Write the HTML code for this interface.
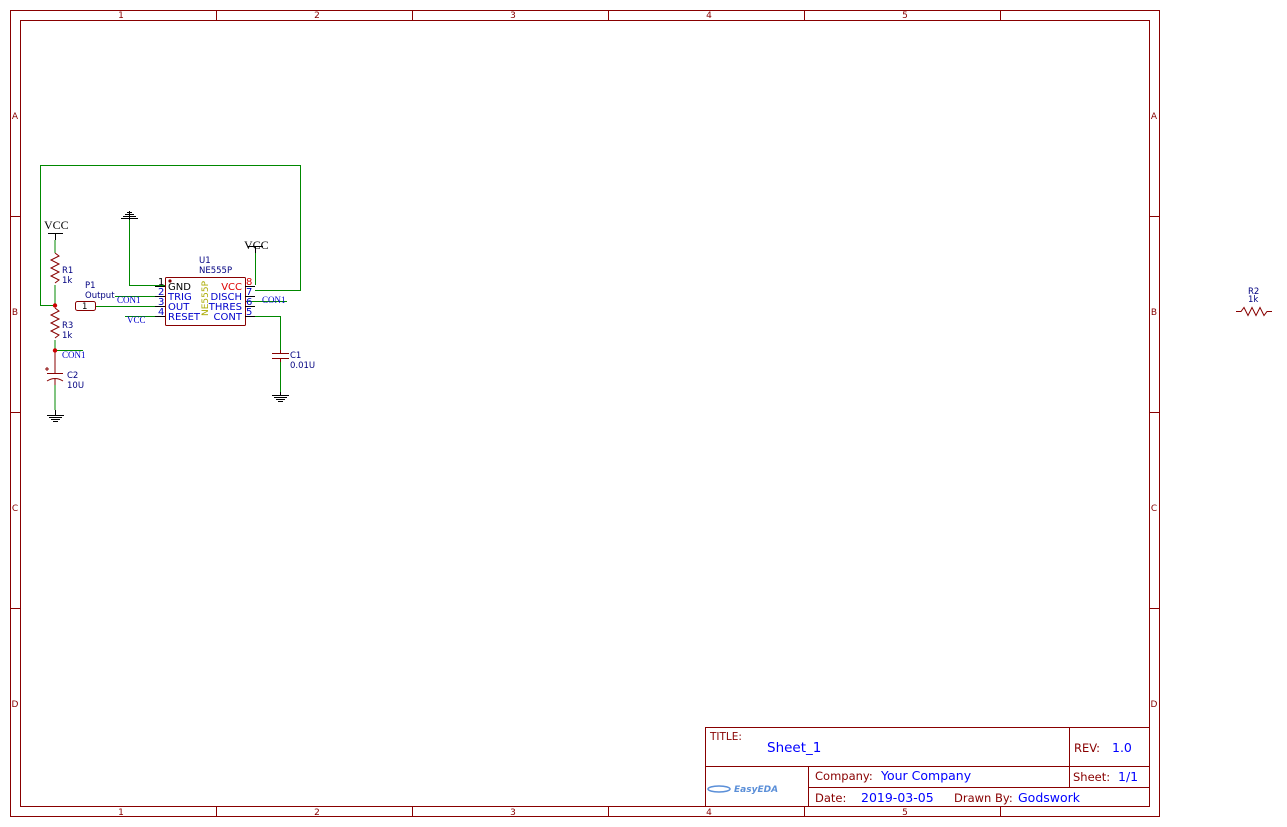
<!DOCTYPE html>
<html><head><meta charset="utf-8"><style>
html,body{margin:0;padding:0;background:#fff;width:1287px;height:827px;overflow:hidden}
svg{display:block}
text{font-family:"DejaVu Sans","Liberation Sans",sans-serif}
.s{font-family:"Liberation Serif",serif}
</style></head><body>
<svg width="1287" height="827" viewBox="0 0 1287 827" xmlns="http://www.w3.org/2000/svg">
<g fill="none" stroke="#880000" stroke-width="1">
<rect x="10.5" y="10.5" width="1149" height="806"/>
<rect x="20.5" y="20.5" width="1129" height="786"/>
<path d="M216.5 10v10M412.5 10v10M608.5 10v10M804.5 10v10M1000.5 10v10M216.5 806v10M412.5 806v10M608.5 806v10M804.5 806v10M1000.5 806v10M10 216.5h10M10 412.5h10M10 608.5h10M1149 216.5h10M1149 412.5h10M1149 608.5h10"/>
<rect x="705.5" y="727.5" width="444" height="79"/>
<path d="M705 766.5h444M808.5 766v40M808 787.5h341M1069.5 727v60"/>
</g>
<g fill="#880000" font-size="9" text-anchor="middle">
<text x="121" y="18">1</text><text x="317" y="18">2</text><text x="513" y="18">3</text><text x="709" y="18">4</text><text x="905" y="18">5</text>
<text x="121" y="815">1</text><text x="317" y="815">2</text><text x="513" y="815">3</text><text x="709" y="815">4</text><text x="905" y="815">5</text>
<text x="15" y="119">A</text><text x="15" y="315">B</text><text x="15" y="511">C</text><text x="15" y="707">D</text>
<text x="1154" y="119">A</text><text x="1154" y="315">B</text><text x="1154" y="511">C</text><text x="1154" y="707">D</text>
</g>
<g font-size="11.5">
<text x="710" y="740" fill="#880000" font-size="10.5">TITLE:</text>
<text x="767" y="752" fill="#0000ff" font-size="13.5">Sheet_1</text>
<text x="1074" y="752" fill="#880000">REV:</text><text x="1112" y="752" fill="#0000ff" font-size="12.5">1.0</text>
<text x="815" y="780" fill="#880000">Company:</text><text x="881" y="780" fill="#0000ff" font-size="12.5">Your Company</text>
<text x="1073" y="781" fill="#880000">Sheet:</text><text x="1118" y="781" fill="#0000ff" font-size="12.5">1/1</text>
<text x="815" y="802" fill="#880000">Date:</text><text x="861" y="802" fill="#0000ff" font-size="12.5">2019-03-05</text>
<text x="954" y="802" fill="#880000">Drawn By:</text><text x="1018" y="802" fill="#0000ff" font-size="12.5">Godswork</text>
<text x="734" y="792" fill="#5b8fd8" font-size="9" font-style="italic" font-weight="bold">EasyEDA</text>
</g>
<ellipse cx="719" cy="789" rx="11" ry="3" fill="none" stroke="#5b8fd8" stroke-width="1.5"/>
<g fill="none" stroke="#008800" stroke-width="1">
<path d="M55.5 305.5H40.5V165.5H300.5V290.5H255"/>
<path d="M55 240v13M55 285v20M55 340v10M55 350.5h28M55 385v25"/>
<path d="M129.5 220v65.5H165"/>
<path d="M255.5 253v32"/>
<path d="M115 296.5h50M125 316.5h40M245 301.5h42M245 316.5h35.5V350M280.5 362v30"/>
<path d="M95 306.5h70"/>
</g>
<g fill="none" stroke="#880000" stroke-width="1">
<path d="M55 253l4 3-8 4 8 4-8 4 8 4-8 4 8 4-4 3"/>
<path d="M55 308l4 3-8 4 8 4-8 4 8 4-8 4 8 4-4 3"/>
<path d="M55 350v23M55 378v7M47 373.5h16M47 381q8-5 16 0"/>
<path d="M45 369h4M47 367v4"/>
<path d="M272 353.5h17M272 358.5h17M280.5 350v3M280.5 359v3"/>
<rect x="165.5" y="277.5" width="80" height="48" rx="1"/>
<rect x="75.5" y="301.5" width="20" height="9" rx="2"/>
<path d="M1236 311.5h5l3-4 4 8 4-8 4 8 4-8 4 8 3-4h5"/>
</g>
<g fill="none" stroke="#000" stroke-width="1">
<path d="M55.5 233v7M48 233.5h15M255.5 246v7M248 246.5h15"/>
<path d="M129.5 211v9M121 218.5h17M123 216.5h13M125 214.5h9M127 212.5h5"/>
<path d="M55.5 410v5M47 415.5h17M49 417.5h13M51 419.5h9M53 421.5h5"/>
<path d="M280.5 392v3M272 395.5h17M274 397.5h13M276 399.5h9M278 401.5h5"/>
<path d="M155 286.5h10M155 296.5h10M155 306.5h10M155 316.5h10M245 286.5h10M245 296.5h10M245 306.5h10M245 316.5h10"/>
</g>
<circle cx="55" cy="305.5" r="2.2" fill="#cc0000"/>
<circle cx="55" cy="350.5" r="2.2" fill="#cc0000"/>
<circle cx="170" cy="281" r="1.6" fill="#880000"/>
<g class="s" fill="#000" font-size="12">
<text x="44" y="229" class="s">VCC</text><text x="244" y="249" class="s">VCC</text>
</g>
<g font-size="8.5" fill="#000080">
<text x="62" y="273">R1</text><text x="62" y="283">1k</text>
<text x="62" y="328">R3</text><text x="62" y="338">1k</text>
<text x="67" y="378">C2</text><text x="67" y="388">10U</text>
<text x="290" y="358">C1</text><text x="290" y="368">0.01U</text>
<text x="85" y="288">P1</text><text x="85" y="298">Output</text>
<text x="199" y="263">U1</text><text x="199" y="273">NE555P</text>
<text x="1248" y="294">R2</text><text x="1248" y="302">1k</text>
<text x="82" y="309" fill="#000" font-size="8.5">1</text>
</g>
<g font-size="10">
<text x="168" y="290" fill="#000">GND</text>
<text x="168" y="300" fill="#0000cc">TRIG</text>
<text x="168" y="310" fill="#0000cc">OUT</text>
<text x="168" y="320" fill="#0000cc">RESET</text>
<text x="242" y="290" fill="#dd0000" text-anchor="end">VCC</text>
<text x="242" y="300" fill="#0000cc" text-anchor="end">DISCH</text>
<text x="242" y="310" fill="#0000cc" text-anchor="end">THRES</text>
<text x="242" y="320" fill="#0000cc" text-anchor="end">CONT</text>
<text x="158" y="285" fill="#000">1</text>
<text x="158" y="295" fill="#0000cc">2</text>
<text x="158" y="305" fill="#0000cc">3</text>
<text x="158" y="315" fill="#0000cc">4</text>
<text x="246" y="285" fill="#dd0000">8</text>
<text x="246" y="295" fill="#0000cc">7</text>
<text x="246" y="305" fill="#0000cc">6</text>
<text x="246" y="315" fill="#0000cc">5</text>
<text transform="translate(208,316) rotate(-90)" fill="#aaaa00" font-size="9">NE555P</text>
</g>
<g class="s" fill="#0000cc" font-size="9">
<text x="117" y="303" class="s">CON1</text>
<text x="127" y="323" class="s">VCC</text>
<text x="262" y="303" class="s">CON1</text>
<text x="62" y="358" class="s">CON1</text>
</g>
</svg>
</body></html>
